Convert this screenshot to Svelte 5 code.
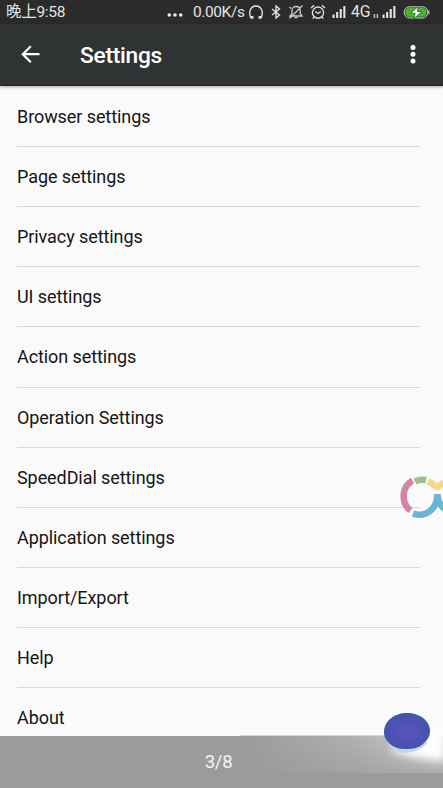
<script>
	const items = [
		'Browser settings',
		'Page settings',
		'Privacy settings',
		'UI settings',
		'Action settings',
		'Operation Settings',
		'SpeedDial settings',
		'Application settings',
		'Import/Export',
		'Help',
		'About'
	]
</script>

{#snippet signal()}
	<svg class='signal' width='14' height='14' viewBox='0 0 14 14' fill='#e4e4e4'>
		<rect x='0.5' y='9.5' width='2.1' height='3.5' />
		<rect x='4.1' y='7' width='2.1' height='6' />
		<rect x='7.7' y='4' width='2.1' height='9' />
		<rect x='11.3' y='1' width='2.1' height='12' />
	</svg>
{/snippet}

<div class='screen'>
	<div class='status'>
		<span class='time'>晚上9:58</span>
		<svg class='dots' width='16' height='6' viewBox='0 0 16 6' fill='#eee'>
			<circle cx='2.3' cy='3' r='1.8' />
			<circle cx='8' cy='3' r='1.8' />
			<circle cx='13.7' cy='3' r='1.8' />
		</svg>
		<span class='speed'>0.00K/s</span>
		<svg class='headphones' width='16' height='16' viewBox='0 0 16 16'>
			<path d='M4.4 13.6H2.6C.4 7.3 2.8 2 8 2s7.6 5.3 5.4 11.6h-1.8' fill='none' stroke='#e4e4e4' stroke-width='1.4' />
			<path d='M3 12h2.4v2.7H3zM10.6 12H13v2.7h-2.4z' fill='#e4e4e4' />
		</svg>
		<svg class='bluetooth' width='10' height='14' viewBox='0 0 10 14' fill='none' stroke='#e4e4e4' stroke-width='1.4'>
			<path d='M1 4l7.5 6L5 13V1l3.5 3L1 10' />
		</svg>
		<svg class='bell' width='16' height='16' viewBox='0 0 16 16' fill='none' stroke='#ccc' stroke-width='1.3'>
			<path d='M2 12h12l-1.8-2.5V6C12 3.8 10 2.5 8 2.5S4 3.8 4 6v3.5zM6.5 13.6h3M1.5 14.5L14.5 1.5' />
			<path d='M1.5 3L3 4.5' />
		</svg>
		<svg class='alarm' width='16' height='16' viewBox='0 0 16 16' fill='none' stroke='#ddd' stroke-width='1.4'>
			<circle cx='8' cy='8.6' r='5.6' />
			<path d='M5.2 7.5L8 9.5l2.8-2M1 4l3-2.6M15 4l-3-2.6M4 13l-1.3 1.6M12 13l1.3 1.6' />
		</svg>
		{@render signal()}
		<span class='network'>4G</span>
		<svg class='data' width='6' height='6' viewBox='0 0 6 6' fill='#bbb'>
			<path d='M.6 1h1.6v4H.6zM3.6 1h1.6v4H3.6z' />
		</svg>
		{@render signal()}
		<svg class='battery' width='27' height='13' viewBox='0 0 27 13'>
			<rect x='1.2' y='.8' width='23.6' height='11.2' rx='5.4' fill='#2b4b25' stroke='#ccd8c8' stroke-width='1' />
			<rect x='2.4' y='2' width='21.2' height='8.8' rx='4.2' fill='#48b52f' />
			<path d='M25.2 4.5h1.3v3.6h-1.3z' fill='#bbb' />
			<path d='M15.2.5L7.8 7.2h4.4L11 12.6l7.800-7h-4.400z' fill='#fff' stroke='#2b4b25' stroke-width='.7' />
		</svg>
	</div>

	<header>
		<svg class='back' width='20' height='20' viewBox='0 0 20 20' fill='none' stroke='#fff' stroke-width='2.2'>
			<path d='M18.500 9.200H2.200M9.800 1.200L1.800 9.200l8 8' />
		</svg>
		<h1>Settings</h1>
		<svg class='more' width='6' height='20' viewBox='0 0 6 20' fill='#fff'>
			<circle cx='3' cy='2.4' r='2.5' />
			<circle cx='3' cy='9.2' r='2.5' />
			<circle cx='3' cy='16' r='2.5' />
		</svg>
	</header>

	<ul>
		{#each items as item}
			<li>{item}</li>
		{/each}
	</ul>

	<footer>3/8</footer>

	<svg class='watermark' width='44' height='44' viewBox='0 0 44 44' fill='none' stroke-width='6.5'>
		<path d='M13.5 5.5C2 12 2 28 11.5 35.5' stroke='#d584a5' />
		<path d='M16 6.5Q21 3.8 27 5' stroke='#9bc089' />
		<path d='M29 6.500Q34 9 38.500 12.500L45 7' stroke='#f4d890' stroke-linejoin='bevel' />
		<path d='M14 38.500C26 43 38 35 38.500 19M38.500 19Q38.500 29 46 34' stroke='#6db5d8' />
	</svg>

	<svg class='blob' width='203' height='88' viewBox='0 0 203 88'>
		<defs>
			<linearGradient id='glare'>
				<stop offset='0' stop-color='#aeb1b0' stop-opacity='0' />
				<stop offset='.55' stop-color='#b4b7b6' stop-opacity='.8' />
				<stop offset='1' stop-color='#d5d6d5' />
			</linearGradient>
			<linearGradient id='fade' x2='0' y2='1'>
				<stop offset='0' stop-color='#fff' />
				<stop offset='1' stop-color='#555' />
			</linearGradient>
			<mask id='down'>
				<rect y='36' width='203' height='37' fill='url(#fade)' />
			</mask>
			<filter id='soft' x='-30%' y='-30%' width='160%' height='160%'>
				<feGaussianBlur stdDeviation='4' />
			</filter>
			<radialGradient id='ball'>
				<stop offset='0' stop-color='#5856b6' />
				<stop offset='.8' stop-color='#4c50b4' />
				<stop offset='1' stop-color='#4058a8' />
			</radialGradient>
		</defs>
		<rect y='36' width='203' height='37' fill='url(#glare)' mask='url(#down)' />
		<path d='M205 30h-20l-35 20q16 8 55 11z' fill='#fff' filter='url(#soft)' />
		<path d='M0 35.5h146' stroke='#858989' opacity='.3' />
		<path d='M148 42q4 11 17 11 14 0 23-11z' fill='#c7d5e8' />
		<path d='M144 32C144 21 154 13 167 13s23 8 23 18c0 6-3 9-7 13-4 4-10 5-17 5-8 0-13-2-17-6-4-4-5-7-5-11z' fill='url(#ball)' />
	</svg>
</div>

<style>
	:global(body) {
		margin: 0;
	}

	.screen {
		position: relative;
		display: flex;
		flex-direction: column;
		height: 788px;
		overflow: hidden;
		background: #fafafa;
		color: #151515;
		font-family: Roboto, 'Noto Sans CJK SC', sans-serif;
	}

	svg {
		display: block;
		flex: none;
	}

	.status {
		display: flex;
		flex: none;
		align-items: center;
		height: 24px;
		background: #2b2b2b;
		color: #e4e4e4;
		font-size: 16px;
		line-height: 24px;
		white-space: nowrap;
	}

	.time {
		box-sizing: border-box;
		width: 167px;
		padding-left: 6px;
		font-size: 15.5px;
		letter-spacing: -0.3px;
	}

	.dots {
		margin: 5px 10px 0 0;
	}

	.speed {
		width: 55px;
		font-size: 15.5px;
		letter-spacing: -0.4px;
	}

	.bluetooth {
		margin-left: 7px;
	}

	.bell {
		margin-left: 7px;
	}

	.alarm {
		margin: 0 6px 0 6px;
	}

	.network {
		width: 22px;
		margin-left: 5px;
		font-size: 15.8px;
		letter-spacing: -0.2px;
	}

	.data {
		margin: 7px 3px 0 0;
	}

	.battery {
		margin-left: 7px;
	}

	header {
		z-index: 1;
		display: flex;
		flex: none;
		align-items: center;
		box-sizing: border-box;
		height: 62px;
		padding: 0 27px 0 21px;
		border-bottom: 1px solid #222425;
		background: #303334;
		box-shadow: 0 1px 3px rgb(0 0 0 / 0.35);
		color: #fff;
	}

	h1 {
		flex: 1;
		margin: 2px 0 0 39px;
		font-size: 22.7px;
		font-weight: 500;
		letter-spacing: -0.25px;
		line-height: 30px;
	}

	ul {
		flex: 1;
		min-height: 0;
		margin: 0;
		padding: 0.8px 23px 0 17px;
		overflow: hidden;
		list-style: none;
	}

	li {
		box-sizing: border-box;
		height: 60.17px;
		border-bottom: 1px solid #d8d8d8;
		font-size: 18px;
		letter-spacing: -0.08px;
		line-height: 60px;
	}

	footer {
		flex: none;
		height: 52px;
		background: #9b9b9b;
		color: #f3f3f3;
		font-size: 18.6px;
		letter-spacing: -0.3px;
		line-height: 52px;
		text-align: center;
		text-indent: -6px;
	}

	.watermark {
		position: absolute;
		top: 475px;
		right: 0;
	}

	.blob {
		position: absolute;
		right: 0;
		bottom: 0;
	}
</style>
